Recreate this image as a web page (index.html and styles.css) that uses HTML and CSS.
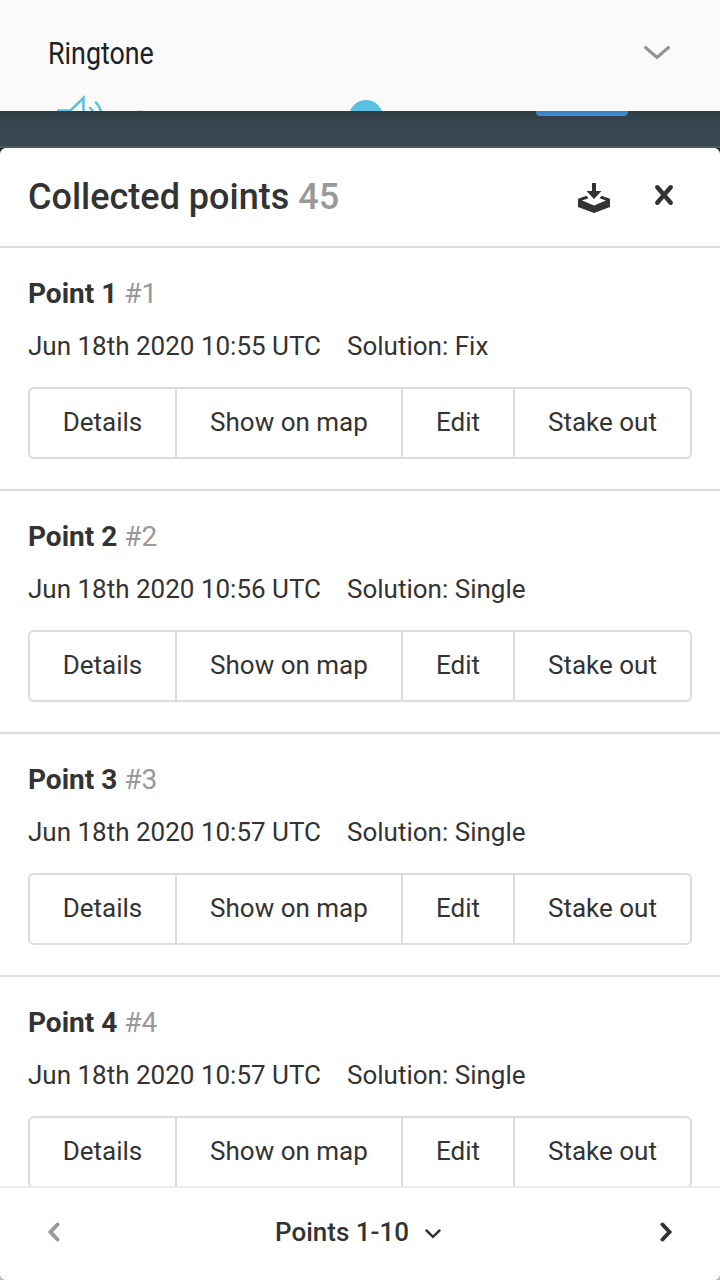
FILE: index.html
```
<!DOCTYPE html>
<html lang="en">
<head>
<meta charset="utf-8">
<title>Collected points</title>
<link rel="stylesheet" href="styles.css">
</head>
<body>
<div class="screen">
  <header class="system">
    <span class="system-title">Ringtone</span>
    <svg class="system-chevron" width="28" height="16" viewBox="0 0 28 16"><path d="M2.500 2.500 14 12.500 25.500 2.500"/></svg>
    <svg class="volume" width="580" height="17" viewBox="0 0 580 17">
      <path class="speaker" d="M1 19V16.500H13.500L26.500 4V19M33 14Q36 16 37 20M39 8.500Q43 13 44.500 19"/>
      <circle class="knob" cx="309" cy="23" r="17"/>
      <ellipse class="track-label" cx="83" cy="17.500" rx="4" ry="1.500"/>
    </svg>
  </header>
  <div class="backdrop"><div class="confirm"></div></div>
  <main class="sheet">
    <div class="sheet-header">
      <h1 class="title">Collected points <span class="muted">45</span></h1>
      <svg class="export" width="32" height="30" viewBox="0 0 32 30">
        <path d="M14 0h4v8h5.500L16 16 8.500 8H14z"/>
        <path d="M8.500 12.800 10.500 15.200 4 17.500 16 22.500 28 17.500 21.500 15.200 23.500 12.800 32 15.800V24L16 30 0 24V15.800z"/>
      </svg>
      <svg class="close" width="20" height="22" viewBox="0 0 20 22"><path d="M3.300 3.300 16.700 18.700M16.700 3.300 3.300 18.700"/></svg>
    </div>
    <div class="list">
      <section class="point">
        <h2 class="name">Point 1 <span class="number">#1</span></h2>
        <p class="meta"><span class="date">Jun 18th 2020 10:55 UTC</span><span>Solution: Fix</span></p>
        <div class="actions"><button>Details</button><button>Show on map</button><button>Edit</button><button>Stake out</button></div>
      </section>
      <section class="point">
        <h2 class="name">Point 2 <span class="number">#2</span></h2>
        <p class="meta"><span class="date">Jun 18th 2020 10:56 UTC</span><span>Solution: Single</span></p>
        <div class="actions"><button>Details</button><button>Show on map</button><button>Edit</button><button>Stake out</button></div>
      </section>
      <section class="point">
        <h2 class="name">Point 3 <span class="number">#3</span></h2>
        <p class="meta"><span class="date">Jun 18th 2020 10:57 UTC</span><span>Solution: Single</span></p>
        <div class="actions"><button>Details</button><button>Show on map</button><button>Edit</button><button>Stake out</button></div>
      </section>
      <section class="point">
        <h2 class="name">Point 4 <span class="number">#4</span></h2>
        <p class="meta"><span class="date">Jun 18th 2020 10:57 UTC</span><span>Solution: Single</span></p>
        <div class="actions"><button>Details</button><button>Show on map</button><button>Edit</button><button>Stake out</button></div>
      </section>
    </div>
    <footer class="pager">
      <svg class="arrow arrow-off" width="12" height="20" viewBox="0 0 12 20"><path d="M9.500 2.500 2.500 10 9.500 17.500"/></svg>
      <div class="range"><span>Points 1-10</span><svg class="caret" width="16" height="10" viewBox="0 0 16 10"><path d="M1.500 1.500 8 7.800 14.500 1.500"/></svg></div>
      <svg class="arrow" width="12" height="20" viewBox="0 0 12 20"><path d="M2.500 2.500 9.500 10 2.500 17.500"/></svg>
    </footer>
  </main>
</div>
</body>
</html>
```

FILE: styles.css
```
* { box-sizing: border-box; }
body { margin: 0; font-family: Roboto, "Liberation Sans", sans-serif; color: #333; }
svg { display: block; fill: none; stroke-linecap: round; flex: none; }
.screen { height: 1280px; overflow: hidden; display: flex; flex-direction: column; background: linear-gradient(#37474f 148px, #1d2a32 148px, #1d2a32 600px, #a9bfcd 600px); }
.system { position: relative; height: 111px; flex: none; background: #fafafa; display: flex; justify-content: space-between; padding: 33px 49px 0 48px; }
.system-title { font-size: 30.500px; line-height: 42px; color: #212121; transform: scaleX(.88); transform-origin: left; }
.system-chevron { margin-top: 12px; stroke: #8f9696; stroke-width: 3; }
.volume { position: absolute; left: 57px; bottom: 0; overflow: hidden; }
.speaker { stroke: #5bbfe0; stroke-width: 2.500; }
.knob { fill: #5bc0e4; }
.track-label { fill: #dcdede; }
.backdrop { height: 37px; flex: none; background: linear-gradient(#2e3b42, #35444c 8px, #37474f 16px); border-bottom: 2px solid #4b5960; padding-left: 536px; }
.confirm { width: 92px; height: 5px; background: linear-gradient(#3b80bc, #3d8ed8); border-radius: 0 0 4px 4px; }
.sheet { height: 1132px; background: #fff; border-radius: 6px; overflow: hidden; display: flex; flex-direction: column; }
.sheet-header { height: 100px; flex: none; border-bottom: 2px solid #dcdcdc; display: flex; align-items: flex-start; padding: 26px 46px 0 28px; }
.title { margin: 1px 0 0; font-size: 36px; font-weight: 500; line-height: 44px; flex: 1; white-space: nowrap; }
.muted { color: #999; }
.export { fill: #333; margin: 9px 44px 0 0; }
.close { stroke: #333; stroke-width: 4.500; margin-top: 10px; }
.list { flex: 1; min-height: 0; overflow: hidden; }
.point { height: 243px; border-bottom: 2px solid #dcdcdc; padding: 28px 28px 0; }
.name { margin: 0; font-size: 28px; font-weight: 700; line-height: 36px; }
.number { font-weight: 400; color: #999; }
.meta { margin: 16px 0 23px; font-size: 26px; line-height: 36px; display: flex; gap: 26px; white-space: nowrap; }
.actions { height: 72px; display: grid; grid-template-columns: 145px 226px 112px 177px; border: 2px solid #dcdcdc; border-radius: 6px; }
.actions button { font: inherit; font-size: 26px; line-height: 36px; color: #333; background: none; border: 0; border-left: 2px solid #dcdcdc; padding: 0 0 2px; white-space: nowrap; }
.actions button:first-child { border-left: 0; }
.pager { height: 94px; flex: none; border-top: 2px solid #ebebeb; display: flex; justify-content: space-between; align-items: flex-start; padding: 27px 48px 0; }
.arrow { stroke: #333; stroke-width: 4; margin-top: 7px; }
.arrow-off { stroke: #999; }
.range { display: flex; gap: 16px; margin-right: 4px; font-size: 26px; font-weight: 500; line-height: 34px; white-space: nowrap; }
.caret { stroke: #333; stroke-width: 2.500; margin-top: 14px; }
```
